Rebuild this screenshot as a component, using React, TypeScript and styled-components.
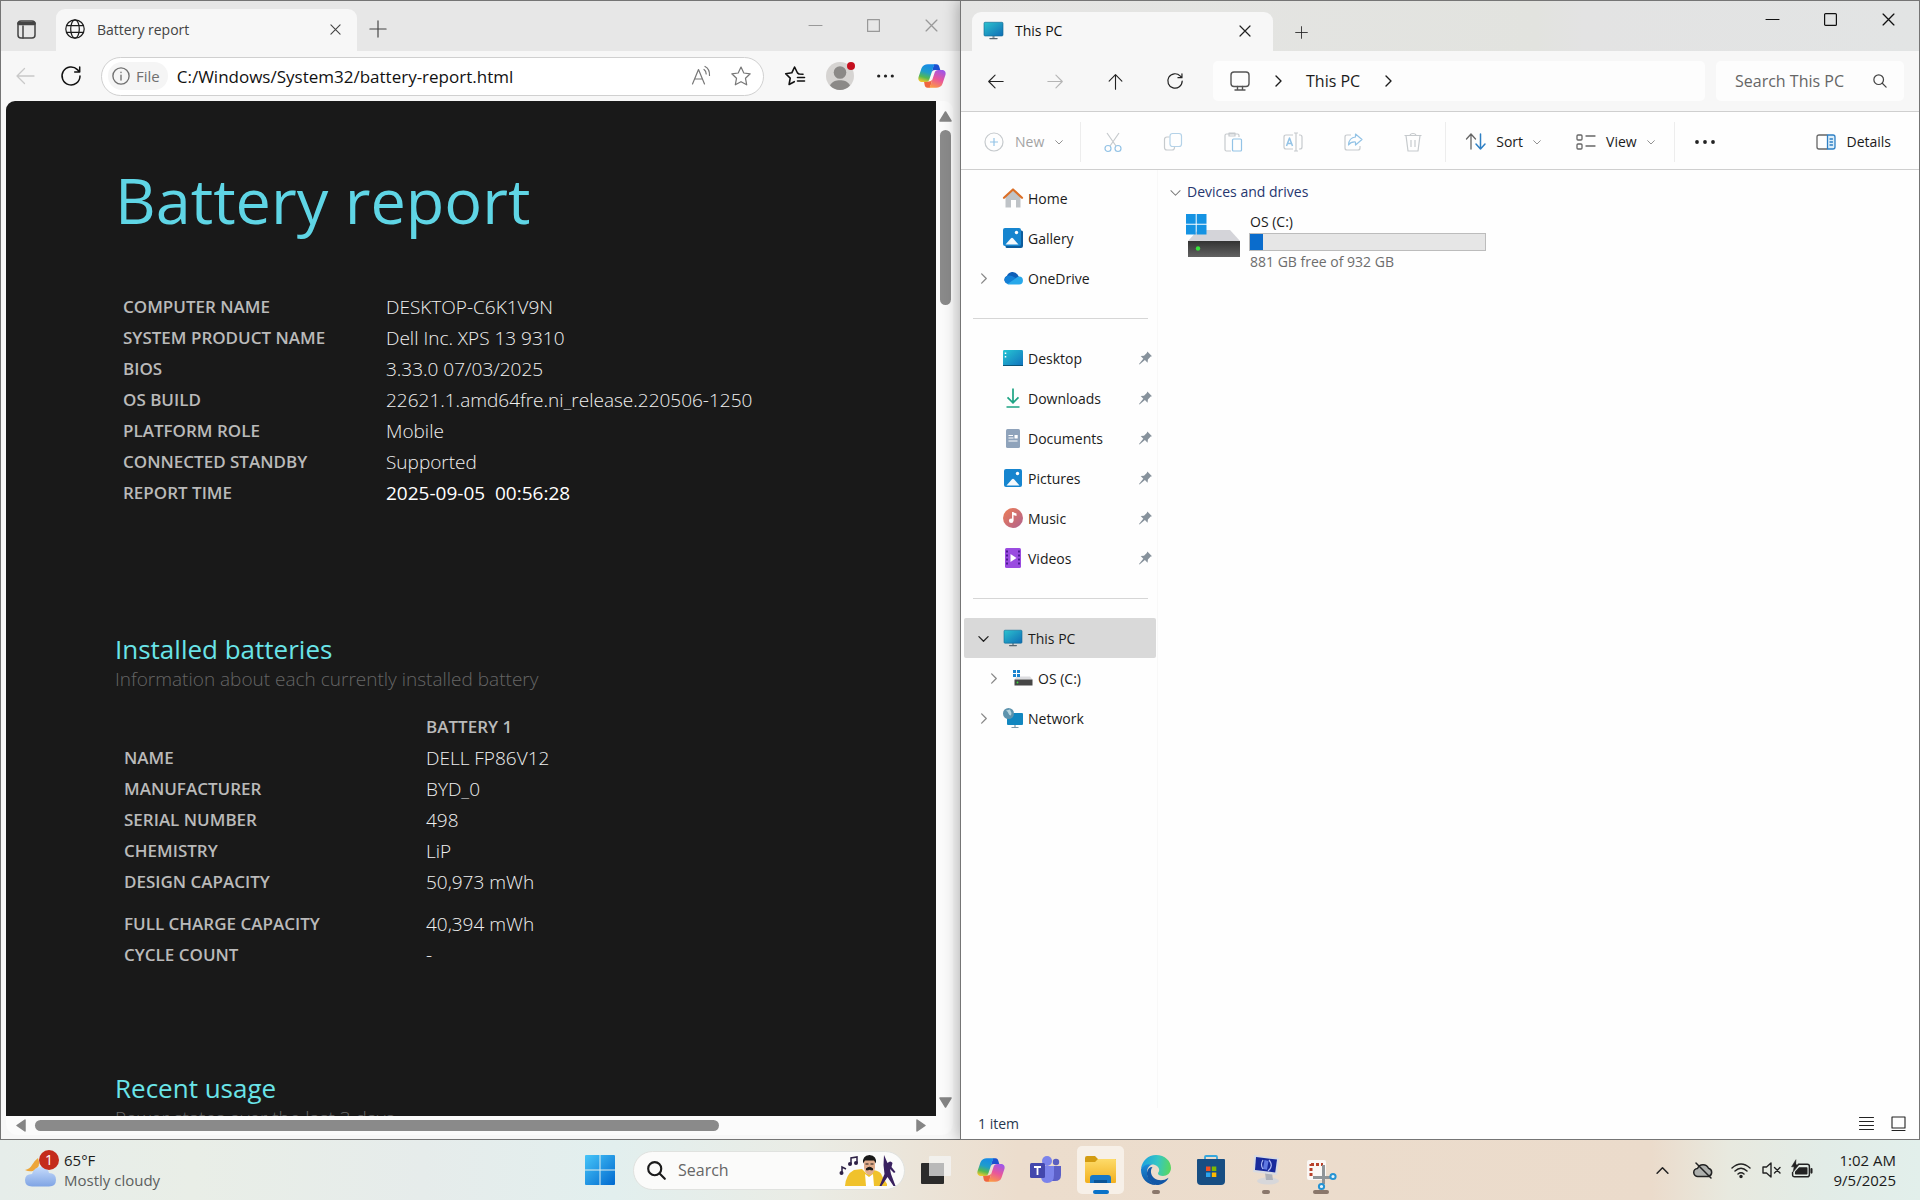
import React from "react";
import styled, { createGlobalStyle } from "styled-components";

const GlobalStyle = createGlobalStyle`
  *, *::before, *::after { box-sizing: border-box; }
  body { margin: 0; font-family: "Open Sans", "Noto Sans", sans-serif; font-size: 14px; color: #1b1b1b; }
  button, input { font: inherit; color: inherit; border: 0; background: none; padding: 0; margin: 0; }
  h1, h2, p, ul { margin: 0; padding: 0; font-weight: 400; }
  ul { list-style: none; }
  svg { display: block; flex: none; overflow: visible; }
`;

/* ---------- desktop ---------- */

const Desktop = styled.div`
  display: grid;
  grid-template-rows: minmax(0, 1fr) 60px;
  height: 100vh;
  overflow: hidden;
`;

const Windows = styled.main`
  display: grid;
  grid-template-columns: minmax(0, 1fr) minmax(0, 1fr);
  min-height: 0;
`;

const AppWindow = styled.section<{ $front?: boolean }>`
  display: flex;
  flex-direction: column;
  min-width: 0;
  min-height: 0;
  background: ${(p) => (p.$front ? "#fefefe" : "#f7f7f7")};
  border: 1px solid #757575;
  border-right-width: ${(p) => (p.$front ? "1px" : "0")};
  box-shadow: ${(p) => (p.$front ? "-2px 0 14px rgba(0, 0, 0, 0.28)" : "none")};
`;

const TitleBar = styled.header<{ $tone: string }>`
  display: flex;
  align-items: flex-end;
  height: 50px;
  flex: none;
  background: ${(p) => p.$tone};
`;

const Tab = styled.div<{ $height: number; $lead: number; $inset: number }>`
  display: flex;
  align-items: center;
  width: 301px;
  height: ${(p) => p.$height}px;
  margin-left: ${(p) => p.$lead}px;
  padding: 0 12px 2px ${(p) => p.$inset}px;
  gap: 12px;
  background: #f7f7f7;
  border-radius: 9px 9px 0 0;
`;

const TabTitle = styled.span<{ $active?: boolean }>`
  flex: 1;
  font-weight: ${(p) => (p.$active ? 500 : 400)};
  color: ${(p) => (p.$active ? "#111" : "#444")};
`;

const IconButton = styled.button<{ $w?: number; $h?: number; $color?: string }>`
  display: flex;
  align-items: center;
  justify-content: center;
  width: ${(p) => p.$w ?? 40}px;
  height: ${(p) => p.$h ?? 40}px;
  color: ${(p) => p.$color ?? "#222"};
  flex: none;
`;

const Controls = styled.div<{ $pad: number; $color: string }>`
  display: flex;
  align-self: flex-start;
  margin-left: auto;
  padding-right: ${(p) => p.$pad}px;
  color: ${(p) => p.$color};
`;

/* ---------- browser ---------- */

const BrowserBar = styled.div`
  display: flex;
  align-items: center;
  height: 50px;
  flex: none;
  padding: 0 4px 0 1px;
`;

const AddressBar = styled.label`
  display: flex;
  align-items: center;
  flex: 1;
  min-width: 0;
  height: 39px;
  margin: 0 8px 0 7px;
  padding: 0 2px 0 6px;
  background: #fff;
  border: 1px solid #d0d0d0;
  border-radius: 20px;
`;

const SchemeChip = styled.span`
  display: flex;
  align-items: center;
  gap: 6px;
  height: 28px;
  padding: 0 8px 0 4px;
  margin-right: 9px;
  border-radius: 14px;
  background: #f5f5f5;
  color: #707070;
  font-size: 15px;
`;

const AddressInput = styled.input`
  flex: 1;
  min-width: 0;
  font-size: 17px;
  color: #111;
  outline: none;
`;

const AvatarWrap = styled(IconButton)`
  position: relative;
  &::after {
    content: "";
    position: absolute;
    top: 6px;
    right: 7px;
    width: 8px;
    height: 8px;
    border-radius: 50%;
    background: #c50f1f;
  }
`;

const Viewport = styled.div`
  display: grid;
  grid-template-columns: minmax(0, 1fr) 17px;
  grid-template-rows: minmax(0, 1fr) 19px;
  flex: 1;
  min-height: 0;
  margin: 0 7px 4px 5px;
  background: #fbfbfb;
  border-radius: 9px 9px 12px 12px;
  overflow: hidden;
`;

const Report = styled.article`
  overflow: hidden;
  min-height: 0;
  padding: 59px 20px 0 109px;
  background: #191919;
  white-space: nowrap;
`;

const ReportTitle = styled.h1`
  font-size: 63px;
  line-height: 80px;
  color: #5fd5e5;
`;

const DataTable = styled.table<{ $labelWidth: number; $top: number; $inset: number }>`
  width: 100%;
  margin-top: ${(p) => p.$top}px;
  border-collapse: collapse;
  table-layout: fixed;
  line-height: 24px;
  text-align: left;

  tr { height: 31px; }
  th, td { padding: 0; vertical-align: middle; }
  tr > :first-child { width: ${(p) => p.$labelWidth}px; padding-left: ${(p) => p.$inset}px; }
  th { font-size: 17px; font-weight: 600; color: #bababa; text-transform: uppercase; }
  td { font-size: 19px; font-weight: 300; color: #f0f0f0; white-space: pre; }
`;

const StrongCell = styled.td`
  && { font-weight: 400; color: #fff; }
`;

const SpacedRow = styled.tr`
  && { height: 42px; }
  && > * { padding-top: 11px; }
`;

const SectionTitle = styled.h2<{ $top: number }>`
  margin-top: ${(p) => p.$top}px;
  font-size: 26px;
  line-height: 32px;
  font-weight: 500;
  color: #6ae4e8;
`;

const SectionNote = styled.p`
  font-size: 19px;
  line-height: 28px;
  font-weight: 300;
  color: #666;
`;

const Scroll = styled.div<{ $vertical?: boolean }>`
  display: flex;
  flex-direction: ${(p) => (p.$vertical ? "column" : "row")};
  align-items: center;
  padding: ${(p) => (p.$vertical ? "9px 0 7px 2px" : "0 9px")};
`;

const Thumb = styled.div<{ $vertical?: boolean }>`
  flex: none;
  background: #8a8a8a;
  border-radius: 6px;
  ${(p) => (p.$vertical ? "width: 11px; height: 17.5%; margin: 7px 0 auto;" : "height: 11px; width: 75%; margin: 0 auto 0 7px;")}
`;

/* ---------- explorer ---------- */

const ExplorerNav = styled.div`
  display: flex;
  align-items: center;
  height: 61px;
  flex: none;
  padding: 0 15px 0 4px;
  background: #f7f7f7;
  border-bottom: 1px solid #cfcfcf;
`;

const Breadcrumb = styled.div`
  display: flex;
  align-items: center;
  flex: 1;
  min-width: 0;
  height: 40px;
  margin-left: 8px;
  padding-left: 17px;
  gap: 22px;
  background: #fdfdfd;
  border-radius: 5px;
  font-size: 16px;
`;

const SearchField = styled.label`
  display: flex;
  align-items: center;
  width: 188px;
  height: 40px;
  margin-left: 11px;
  padding: 0 17px 0 19px;
  background: #fdfdfd;
  border-radius: 5px;
  color: #444;
  font-size: 16px;
`;

const BareInput = styled.input`
  flex: 1;
  width: 100%;
  min-width: 0;
  outline: none;
  &::placeholder { color: #666; opacity: 1; }
`;

const CommandBar = styled.div`
  display: flex;
  align-items: center;
  height: 58px;
  flex: none;
  padding: 2px 20px 0 23px;
  border-bottom: 1px solid #cfcfcf;
`;

const Command = styled.button<{ $dim?: boolean; $gap?: number; $right?: number }>`
  display: flex;
  align-items: center;
  gap: ${(p) => p.$gap ?? 10}px;
  margin-right: ${(p) => p.$right ?? 0}px;
  height: 40px;
  color: ${(p) => (p.$dim ? "#a3a3a3" : "#1b1b1b")};
  & > svg:last-child:not(:first-child) { color: #8a8a8a; }
`;

const Divider = styled.span<{ $before?: number; $after?: number }>`
  width: 1px;
  height: 40px;
  margin-left: ${(p) => p.$before ?? 0}px;
  margin-right: ${(p) => p.$after ?? 0}px;
  background: #ededed;
`;

const Push = styled.span`
  flex: 1;
`;

const ExplorerBody = styled.div`
  display: grid;
  grid-template-columns: 197px minmax(0, 1fr);
  flex: 1;
  min-height: 0;
`;

const SideNav = styled.nav`
  padding: 8px 1px 0 3px;
  border-right: 1px solid #f8f8f8;
`;

const NavItem = styled.button<{ $active?: boolean; $nested?: boolean }>`
  display: grid;
  grid-template-columns: 20px 20px 1fr 17px;
  column-gap: 5px;
  align-items: center;
  justify-items: start;
  width: 100%;
  height: 40px;
  padding-left: ${(p) => (p.$nested ? "24px" : "14px")};
  background: ${(p) => (p.$active ? "#d9d9d9" : "transparent")};
  border-radius: 2px;
  color: #1b1b1b;
  text-align: left;
  & > :nth-child(2) { justify-self: center; }
  & > :nth-child(1) { color: ${(p) => (p.$active ? "#222" : "#888")}; }
`;

const NavRule = styled.li`
  height: 40px;
  padding: 20px 8px 0 9px;
  &::before { content: ""; display: block; height: 1px; background: #d6d6d6; }
`;

const FilePane = styled.div`
  padding: 11px 12px;
`;

const GroupHeading = styled.h2`
  display: flex;
  align-items: center;
  gap: 6px;
  font-size: 14px;
  line-height: 22px;
  color: #26366f;
  & > svg { color: #777; }
`;

const Drive = styled.div`
  display: grid;
  grid-template-columns: 55px 237px;
  column-gap: 8px;
  margin: 9px 0 0 16px;
  & > svg { margin-top: 2px; }
`;

const DriveName = styled.p`
  padding-left: 1px;
  line-height: 20px;
`;

const Usage = styled.div`
  height: 18px;
  margin: 1px 0;
  background: #e6e6e6;
  border: 1px solid #bcbcbc;
`;

const UsageFill = styled.div`
  height: 100%;
  background: #0a6ccc;
`;

const DriveNote = styled(DriveName)`
  color: #6d6d6d;
`;

const StatusBar = styled.footer`
  display: flex;
  align-items: center;
  gap: 17px;
  height: 31px;
  flex: none;
  padding: 0 13px 0 17px;
  color: #26384f;
`;

/* ---------- taskbar ---------- */

const Taskbar = styled.footer`
  display: grid;
  grid-template-columns: minmax(0, 1fr) auto minmax(0, 1fr);
  align-items: center;
  background: linear-gradient(90deg, #e6edea 0%, #e9eee7 10%, #e6eceb 22%, #e2efee 32%, #eaece5 42%, #ecddcd 53%, #ebdbcb 86%, #e8e9df 90%, #e2ece7 95%, #e2efeb 100%);
`;

const Weather = styled.button`
  display: flex;
  align-items: center;
  gap: 7px;
  padding-left: 24px;
  text-align: left;
  font-size: 15px;
  line-height: 20px;
`;

const WeatherIcon = styled.span`
  position: relative;
  width: 33px;
  height: 38px;
`;

const CountBadge = styled.span`
  position: absolute;
  top: -1px;
  right: -2px;
  width: 20px;
  height: 20px;
  border-radius: 50%;
  background: #c42b1c;
  color: #fff;
  font-size: 14px;
  text-align: center;
`;

const Muted = styled.span`
  display: block;
  color: #5c5f5e;
`;

const Dock = styled.div`
  display: flex;
  align-items: center;
`;

const DockButton = styled.button<{ $state?: "active" | "open" | "wide" }>`
  position: relative;
  display: flex;
  align-items: center;
  justify-content: center;
  width: 55px;
  height: 60px;

  &::before {
    content: "";
    position: absolute;
    inset: 6px 4px 6px;
    border-radius: 5px;
    background: ${(p) => (p.$state === "active" ? "#f7f0e8" : "transparent")};
  }
  &::after {
    content: "";
    position: absolute;
    bottom: 6px;
    width: ${(p) => (p.$state === "open" ? "8px" : "16px")};
    height: 4px;
    border-radius: 2px;
    background: ${(p) => (p.$state === "active" ? "#0a72c8" : p.$state ? "#8a776b" : "transparent")};
  }
  & > svg { position: relative; z-index: 1; }
`;

const DockSearch = styled.label`
  display: flex;
  align-items: center;
  gap: 12px;
  width: 272px;
  height: 39px;
  margin: 0 3px 0 6px;
  padding: 0 7px 0 13px;
  background: #fbfbfa;
  border: 1px solid #e0e2df;
  border-radius: 20px;
  font-size: 16px;
`;

const Tray = styled.div`
  display: flex;
  align-items: center;
  justify-content: flex-end;
  padding-right: 24px;
`;

const Clock = styled.time`
  margin-left: 15px;
  font-size: 15px;
  line-height: 20px;
  text-align: right;
`;

/* ---------- icons ---------- */

type IconProps = { size?: number; sw?: number; children?: React.ReactNode; box?: number };
const Line = ({ size = 20, sw = 1.3, box = 20, children }: IconProps) => (
  <svg width={size} height={size} viewBox={`0 0 ${box} ${box}`} fill="none" stroke="currentColor" strokeWidth={sw} strokeLinecap="round" strokeLinejoin="round" aria-hidden="true">
    {children}
  </svg>
);
const Plus = ({ size = 18 }: IconProps) => <Line size={size}><path d="M10 1v18M1 10h18" /></Line>;
const Cross = ({ size = 12 }: IconProps) => <Line size={size} box={12} sw={1.2}><path d="M1 1l10 10M11 1L1 11" /></Line>;
const Chevron = ({ dir, size = 12, sw = 1.4 }: { dir: "right" | "down" | "up"; size?: number; sw?: number }) => (
  <Line size={size} box={12} sw={sw}>
    <path d={dir === "right" ? "M4 1l5 5-5 5" : dir === "down" ? "M1 4l5 5 5-5" : "M1 8.500l5-5 5 5"} />
  </Line>
);
const Arrow = ({ turn = 0, size = 18 }: { turn?: number; size?: number }) => (
  <Line size={size}><g transform={`rotate(${turn} 10 10)`}><path d="M19 10H2M9.500 2.500L2 10l7.500 7.500" /></g></Line>
);
const Refresh = ({ size = 20, sw = 1.5 }: IconProps) => (
  <Line size={size} sw={sw}><path d="M19 10a9 9 0 1 1-2.600-6.400L18.500 5.700M18.700 1v4.900h-5" /></Line>
);
const Dots = ({ size = 18 }: IconProps) => (
  <svg width={size} height="6" viewBox="0 0 20 6" fill="currentColor" aria-hidden="true">
    <circle cx="2" cy="3" r="1.900" /><circle cx="10" cy="3" r="1.900" /><circle cx="18" cy="3" r="1.900" />
  </svg>
);
const Magnifier = ({ size = 15, sw = 1.4 }: IconProps) => (
  <Line size={size} box={16} sw={sw}><circle cx="6.500" cy="6.500" r="5.500" /><path d="M10.600 10.600L15 15" /></Line>
);
const Minimize = () => <Line size={13} box={13} sw={1.1}><path d="M0 6.500h13" /></Line>;
const Maximize = ({ round = 0 }: { round?: number }) => <Line size={13} box={13} sw={1.2}><rect x=".6" y=".6" width="11.800" height="11.800" rx={round} /></Line>;

const TabActions = () => (
  <Line size={19} box={19} sw={1.5}>
    <rect x="1" y="1" width="17" height="17" rx="3" /><path d="M2 3.500h15" strokeWidth="3.600" /><path d="M6 6v12" />
  </Line>
);
const Globe = () => (
  <Line size={20} sw={1.2}><circle cx="10" cy="10" r="9.200" /><ellipse cx="10" cy="10" rx="4.300" ry="9.200" /><path d="M1.600 6.600h16.800M1.600 13.400h16.800" /></Line>
);
const Info = () => <Line size={18} sw={1.5}><circle cx="10" cy="10" r="9" /><path d="M10 9v5.500M10 5.800v.3" /></Line>;
const ReadAloud = () => <Line size={20} sw={1.2}><path d="M1.500 18L7.500 3.500 13.500 18M3.500 13h8M13 3.500c1.500 1 2.200 2.600 2.200 4.500M14 .5c3 1.500 4.700 4.500 4.500 9" /></Line>;
const Star = ({ list }: { list?: boolean }) => (
  <Line size={20} sw={list ? 1.6 : 1.2}>
    {list ? <path d="M12.500 7L9.600 1 6.800 6.800.7 7.700l4.500 4.400L4.100 18.500l5.200-2.800M14 8l4 .2M12.500 11.500h7M12.500 15h7M14 8l-1.500-1" />
      : <path d="M10 1l2.800 6 6.400.8-4.700 4.500 1.200 6.500L10 15.700 4.300 18.800l1.200-6.500L.8 7.800 7.200 7z" />}
  </Line>
);
const Avatar = () => (
  <svg width="28" height="28" viewBox="0 0 28 28" aria-hidden="true">
    <circle cx="14" cy="14" r="14" fill="#d6d4d2" /><circle cx="14" cy="10.500" r="6.300" fill="#8b8987" /><path d="M4 23.500C6 19.500 10 18.300 14 18.300s8 1.200 10 5.200A14 14 0 0 1 14 28 14 14 0 0 1 4 23.500z" fill="#8b8987" />
  </svg>
);
const Copilot = ({ id, size = 28 }: { id: string; size?: number }) => (
  <svg width={size} height={size} viewBox="0 0 28 28" aria-hidden="true">
    <defs>
      <linearGradient id={`${id}a`} x1=".6" y1="0" x2=".3" y2="1"><stop stopColor="#1689e8" /><stop offset=".45" stopColor="#1f9dcb" /><stop offset=".75" stopColor="#55b950" /><stop offset="1" stopColor="#f1c62d" /></linearGradient>
      <linearGradient id={`${id}b`} x1=".7" y1="0" x2=".3" y2="1"><stop stopColor="#a057e8" /><stop offset=".5" stopColor="#e9569a" /><stop offset="1" stopColor="#fb9a45" /></linearGradient>
    </defs>
    <path d="M16 2.200h2.500c1.700 0 2.400 1 2.800 2.500l1 3.300H17c-2 0-3 1-3.600 3z" fill="#1c4fd0" />
    <path d="M12 25.800H9.500c-1.700 0-2.400-1-2.800-2.500L6 19.500h5c2 0 3-1 3.600-3z" fill="#f0653f" />
    <path d="M9.800 2.200h8.400c-1.600 0-2.300 1.200-2.800 2.700l-4 12.300c-.6 1.800-1.700 2.800-3.600 2.800H4.300C1.500 20-.2 18 .5 15.200L3.600 6c.9-2.500 3.500-3.800 6.200-3.800z" fill={`url(#${id}a)`} />
    <path d="M18.200 25.800H9.800c1.600 0 2.300-1.200 2.800-2.700l4-12.300c.6-1.800 1.700-2.800 3.600-2.800h3.500c2.800 0 4.500 2 3.800 4.800L24.400 22c-.9 2.500-3.500 3.800-6.200 3.800z" fill={`url(#${id}b)`} />
  </svg>
);
const Triangle = ({ d }: { d: string }) => <svg width="13" height="13" viewBox="0 0 13 13" fill="#858585" stroke="#858585" strokeWidth="1.500" strokeLinejoin="round" aria-hidden="true"><path d={d} /></svg>;

const Monitor = ({ id, size = 18 }: { id: string; size?: number }) => (
  <svg width={size} height={size} viewBox="0 0 18 18" aria-hidden="true">
    <linearGradient id={id} x1="0" y1="0" x2="1" y2="1"><stop stopColor="#2cc3cf" /><stop offset="1" stopColor="#0f6cb5" /></linearGradient>
    <path d="M8 14h2v2.500H8z" fill="#8b98a0" /><rect x="5" y="16" width="8" height="1.200" rx=".6" fill="#56646e" />
    <rect y="1.200" width="18" height="13" rx="1" fill={`url(#${id})`} stroke="#116a93" strokeWidth=".6" />
  </svg>
);
const HomeIcon = () => (
  <svg width="20" height="20" viewBox="0 0 20 20" aria-hidden="true">
    <path d="M2.500 9L10 2.500 17.500 9v10.500H13V12H8v7.500H2.500z" fill="#bfc3c7" /><path d="M1 9.800L10 1.500l9 8.300" fill="none" stroke="#db6f27" strokeWidth="2.200" strokeLinecap="round" strokeLinejoin="round" />
  </svg>
);
const PictureIcon = ({ stack }: { stack?: boolean }) => (
  <svg width={stack ? 20 : 18} height={stack ? 20 : 18} viewBox={stack ? "0 0 20 20" : "0 0 18 18"} aria-hidden="true">
    {stack && <path d="M17 2.500h1.500q1.500 0 1.500 1.500v14q0 2-2 2H4q-1.500 0-1.500-1.500V17H17z" fill="#0d5c9c" />}
    <rect width="18" height="18" rx="2" fill="#1685cf" /><path d="M2.500 16.500L8 10.200q1-1 2 0l5.500 6.300z" fill="#f5fafd" /><circle cx="13.500" cy="4.500" r="1.700" fill="#fff" />
  </svg>
);
const CloudIcon = () => (
  <svg width="20" height="14" viewBox="0 0 20 14" aria-hidden="true">
    <path d="M4.500 12.500A4 4 0 0 1 4 4.800 6 6 0 0 1 14.500 3.500L16 6l-8 7z" fill="#0f5fb8" /><path d="M3.500 5.200A7 7 0 0 1 9 5l9 5-3 3H5A4.300 4.300 0 0 1 3.500 5.200z" fill="#1380d6" /><path d="M4.500 13l8-5.500A5 5 0 0 1 16 5.600 3.900 3.900 0 0 1 16 13.500H5z" fill="#28a8ea" />
  </svg>
);
const DesktopIcon = () => (
  <svg width="20" height="16" viewBox="0 0 20 16" aria-hidden="true">
    <linearGradient id="desk" x1="0" y1="0" x2="1" y2="1"><stop stopColor="#27c7d3" /><stop offset="1" stopColor="#1171bd" /></linearGradient>
    <rect width="20" height="16" rx="1.200" fill="url(#desk)" /><path d="M2.500 2.500v1.500M2.500 6v1.500" stroke="#fff" strokeWidth="1.500" /><path d="M0 15h20v1H0z" fill="#0b5478" />
  </svg>
);
const DownloadIcon = () => (
  <svg width="16" height="20" viewBox="0 0 16 20" fill="none" stroke="#1ea484" strokeWidth="1.700" aria-hidden="true"><path d="M8 .5v14M2.500 9.300L8 14.800l5.500-5.500M1.500 19h13" /></svg>
);
const DocumentIcon = () => (
  <svg width="14" height="19" viewBox="0 0 14 19" aria-hidden="true">
    <rect width="14" height="19" rx="1.500" fill="#8fa3bb" /><path d="M2.500 6.500H7M2.500 9h5M2.500 12h9" stroke="#fff" strokeWidth="1.200" /><rect x="8.500" y="6" width="3.200" height="3.500" fill="#fff" />
  </svg>
);
const MusicIcon = () => (
  <svg width="20" height="20" viewBox="0 0 20 20" aria-hidden="true">
    <linearGradient id="mus" x1="0" y1="0" x2="1" y2="1"><stop stopColor="#ee7d54" /><stop offset="1" stopColor="#b0628f" /></linearGradient>
    <circle cx="10" cy="10" r="10" fill="url(#mus)" /><path d="M9.800 4v8.500" stroke="#fff" strokeWidth="1.500" /><path d="M9.200 4l4.300 1.500v2.600L9.200 6.800z" fill="#fff" /><circle cx="8.200" cy="12.800" r="2.300" fill="#fff" />
  </svg>
);
const VideoIcon = () => (
  <svg width="16" height="20" viewBox="0 0 16 20" aria-hidden="true">
    <rect width="16" height="20" rx="1.500" fill="#9a4be0" /><path d="M2 2.500v16M14 2.500v16" stroke="#43148a" strokeWidth="1.800" strokeDasharray="2 2" /><path d="M5.500 6l6 4-6 4z" fill="#fff" />
  </svg>
);
const WinLogo = ({ size = 30 }: IconProps) => (
  <svg width={size} height={size} viewBox="0 0 30 30" aria-hidden="true">
    <linearGradient id={`win${size}`} x1="0" y1="0" x2="1" y2="1"><stop stopColor="#47c5f8" /><stop offset="1" stopColor="#0069cf" /></linearGradient>
    <path d="M1 0h13.500v14.500H0V1q0-1 1-1zM15.500 0H29q1 0 1 1v13.500H15.500zM0 15.500h14.500V30H1q-1 0-1-1zM15.500 15.500H30V29q0 1-1 1H15.500z" fill={`url(#win${size})`} />
  </svg>
);
const DriveIcon = ({ size = 55 }: IconProps) => (
  <svg width={size} height={size * 0.8} viewBox="0 0 55 44" aria-hidden="true">
    <linearGradient id={`drv${size}`} x1="0" y1="0" x2="0" y2="1"><stop stopColor="#333" /><stop offset="1" stopColor="#626262" /></linearGradient>
    <path d="M12 16h32l10 11H2z" fill="#d4d4d9" /><rect x="2" y="27" width="52" height="16" fill={`url(#drv${size})`} /><circle cx="12" cy="34.500" r="2.200" fill="#38e23c" />
    <path d="M0 0h9.700v9.700H0zM10.700 0h9.800v9.700h-9.800zM0 10.700h9.700v9.800H0zM10.700 10.700h9.800v9.800h-9.800z" fill="#1593e3" />
  </svg>
);
const SmallDriveIcon = () => (
  <svg width="20" height="16" viewBox="0 0 20 16" aria-hidden="true">
    <path d="M4 6.500h13l2.500 3H1.500z" fill="#dcdcdf" /><rect x="1.500" y="9.500" width="18" height="6" fill="#474747" /><circle cx="4.500" cy="12.500" r=".9" fill="#38e23c" />
    <path d="M0 0h3v3H0zM4 0h3v3H4zM0 4h3v3H0zM4 4h3v3H4z" fill="#1b83cf" />
  </svg>
);
const NetworkIcon = () => (
  <svg width="20" height="20" viewBox="0 0 20 20" aria-hidden="true">
    <rect x="4" y="5" width="16" height="12" rx="1" fill="#1287c0" /><path d="M12 17v2M8.500 19.500h7" stroke="#7c98a8" strokeWidth="1.200" /><circle cx="5.500" cy="5.500" r="5.500" fill="#5d93ad" /><path d="M3 2.500q2 1 2.500 3t2.500 2q1-3-1-6z" fill="#b6d4de" />
  </svg>
);
const Pin = () => (
  <svg width="13" height="14" viewBox="0 0 13 14" fill="#87929c" aria-hidden="true"><path d="M8.300.5L13 5.200l-1.300.4-2.800 2.800-.3 3.300-2.700-2.600L.5 13.500 0 13l4.300-5.300L1.700 5l3.300-.3L7.800 1.900z" /></svg>
);

const Two = ({ children }: { children: React.ReactNode }) => (
  <svg width="20" height="20" viewBox="0 0 20 20" fill="none" stroke="#c6cacd" strokeWidth="1.200" strokeLinejoin="round" aria-hidden="true">{children}</svg>
);
const NewIcon = () => <Two><circle cx="10" cy="10" r="9" /><path d="M10 6v8M6 10h8" stroke="#93c3e6" /></Two>;
const CutIcon = () => <Two><path d="M4 1l9 13M16 1L7 14" /><g stroke="#93c3e6"><circle cx="5" cy="16.500" r="3" /><circle cx="15" cy="16.500" r="3" /></g></Two>;
const CopyIcon = () => <Two><path d="M6.500 5H4Q1.500 5 1.500 7.500v8Q1.500 18 4 18h5q2.500 0 2.500-2.500V15" /><rect x="7" y="1.500" width="11.500" height="13" rx="2.500" stroke="#b4d2e8" /></Two>;
const PasteIcon = () => <Two><path d="M8 19H3.500Q2 19 2 17.500v-14Q2 2 3.500 2h11Q16 2 16 3.500V5M6 1h6v3H6z" /><rect x="9.500" y="7" width="9" height="12" rx="1" stroke="#93c3e6" /></Two>;
const RenameIcon = () => <Two><path d="M10 17H3q-2 0-2-2V5q0-2 2-2h7M16 3h1q2 0 2 2v10q0 2-2 2h-1M13 1.500v17M11 1h4M11 19h4" /><path d="M3.500 14L6.500 6l3 8M4.500 11.500h4" stroke="#93c3e6" strokeWidth="1.500" /></Two>;
const ShareIcon = () => <Two><path d="M8 3H4Q2 3 2 5v11q0 2 2 2h11q2 0 2-2v-2" /><path d="M12.500 2L19 7.500 12.500 13v-3Q8 9.500 5.500 13 6 5.500 12.500 5z" stroke="#93c3e6" /></Two>;
const TrashIcon = () => <Two><path d="M1.500 3.500h17M7 3.500q.3-2 3-2t3 2M3 3.500l2 15.500h10l2-15.500M8 8v7M12 8v7" /></Two>;
const SortIcon = () => <Line><path d="M5 17V2M.5 7L5 2l4.500 5" stroke="#666" /><path d="M14.500 2v15M10 12l4.500 5 4.500-5" stroke="#2d7fc4" strokeWidth="1.500" /></Line>;
const ViewIcon = () => <Line><g stroke="#666"><rect x="1" y="3" width="5" height="5" rx="1" /><rect x="1" y="12" width="5" height="5" rx="1" /><path d="M10 4h9M10 14h9" /></g></Line>;
const DetailsIcon = () => <Line><path d="M11 3H3Q1 3 1 5v10q0 2 2 2h8" stroke="#666" /><path d="M11.500 3H17q2 0 2 2v10q0 2-2 2h-5.500zM14 7h2.500M14 10h2.500M14 13h2.500" stroke="#2d7fc4" fill="#dceefa" /></Line>;
const AddressMonitor = () => <Line size={20} sw={1.4}><g stroke="#555"><rect x="1" y="1" width="18" height="14.500" rx="3" /><path d="M7.500 15.500v3M12.500 15.500v3M5 19h10" /></g></Line>;

const WeatherDrawing = () => (
  <svg width="33" height="38" viewBox="0 0 33 38" aria-hidden="true">
    <path d="M14 7q4 9-5 13-4 1-8-1 5-1 7-5 2-4 6-7z" fill="#eda63a" />
    <linearGradient id="wcl" x1="0" y1="0" x2="0" y2="1"><stop stopColor="#c5dbfb" /><stop offset="1" stopColor="#7fa4e4" /></linearGradient>
    <path d="M8 35.500q-7 0-7-6.500 0-6 7-6 2-7 9-7 7 0 8 6 7 0 7 7 0 6.500-7 6.500z" fill="url(#wcl)" />
  </svg>
);
const SearchArt = () => (
  <svg width="58" height="32" viewBox="0 0 58 32" aria-hidden="true">
    <path d="M6 32q1-12 9-16l8-1 5 5 6-4q8 1 9 6l5 8v2z" fill="#f0c22c" /><path d="M26 20l4 3 4-3 1 12h-8z" fill="#fff" />
    <path d="M25 6h11v8q-1.500 7-5.500 7T25 14z" fill="#e0ac8c" /><path d="M24 9.500q-1-8 6.500-8.500 7.500.5 6.500 8.500L35 6.500h-9z" fill="#191919" /><path d="M27.500 14.500q3-2.500 6 0v1.500q-3-1-6 0zM26.500 10h3M31.500 10h3" stroke="#191919" fill="#191919" />
    <path d="M45 1l3.500 8q3-3 5 0l-1 4 4 5-1.500 1-4-4 1 5 4.500 12h-2l-6-9-6 9h-2l5-12-1-9z" fill="#39215f" />
    <g fill="none" stroke="#2d2145" strokeWidth="1.500"><path d="M12 10V4l6-1v6M3 19v-6l4 2" /></g><g fill="#2d2145"><circle cx="11" cy="10" r="2" /><circle cx="17" cy="9" r="2" /><circle cx="2.500" cy="19" r="2" /></g>
  </svg>
);
const TaskView = () => (
  <svg width="30" height="30" viewBox="0 0 30 30" aria-hidden="true"><rect y="8" width="23" height="21" rx="1" fill="#2b2b2b" /><rect x="8" y="1" width="22" height="20" rx="1" fill="#f4f4f3" opacity=".8" /><path d="M8 8h15v13H8z" fill="#b9b9b9" /></svg>
);
const Teams = () => (
  <svg width="32" height="28" viewBox="0 0 32 28" aria-hidden="true">
    <circle cx="26" cy="6" r="3.200" fill="#5b5fc0" /><path d="M18 10h13v9q0 6-6 6h-5z" fill="#5b5fc7" /><circle cx="17" cy="5" r="5" fill="#7b83eb" /><path d="M11 10h13v9q0 8-7 8-6 0-6-7z" fill="#7b83eb" />
    <rect y="7" width="15" height="15" rx="1.500" fill="#4347ad" /><path d="M4 11h7M7.500 11v8" stroke="#fff" strokeWidth="1.800" />
  </svg>
);
const Folder = () => (
  <svg width="32" height="30" viewBox="0 0 32 30" aria-hidden="true">
    <linearGradient id="fld" x1="0" y1="0" x2="0" y2="1"><stop stopColor="#fddb6a" /><stop offset="1" stopColor="#f2b01e" /></linearGradient>
    <path d="M0 3q0-2 2-2h8l3 3h17q1 0 1 1v6H0z" fill="#d39c12" /><path d="M0 7h10l3-3h17q1 0 1 1v22q0 1-1 1H2q-2 0-2-2z" fill="url(#fld)" /><path d="M5 28v-5q0-3 3-3h15q3 0 3 3v5h-4v-3H9v3z" fill="#1777c6" /><path d="M9 25h13v3H9z" fill="#0c5597" />
  </svg>
);
const Edge = () => (
  <svg width="30" height="30" viewBox="0 0 30 30" aria-hidden="true">
    <defs>
      <linearGradient id="eg1" x1="0" y1=".3" x2="1" y2=".4"><stop stopColor="#1b9fe0" /><stop offset=".55" stopColor="#35c6c4" /><stop offset="1" stopColor="#58d760" /></linearGradient>
      <linearGradient id="eg2" x1="0" y1="0" x2="0" y2="1"><stop stopColor="#1b8ddb" /><stop offset="1" stopColor="#0f529f" /></linearGradient>
    </defs>
    <path d="M0 14C1 6 7 0 15 0c9 0 15 6 15 13 0 5-4 8-8 8-3 0-5-1-5-2.500 0-1 1.200-1.700 1.200-3.500 0-3-3-5.500-7-5.500C6 9.500 1 12 0 14z" fill="url(#eg1)" />
    <path d="M0 14.500C1 11 6 8.800 11 9.500c-4 1.500-5 5-5 8 0 6 4 10.500 9.500 12.400C7 30.500 0 24 0 15z" fill="url(#eg2)" />
    <path d="M11.500 12C9 15 9.500 20 13 23c4 3 10 3 14.500-.3C26 26.500 21 30 15.500 30 9 28.500 5.500 23 6 17.500 6.500 14 8.500 12 11.500 12z" fill="#1257a6" />
  </svg>
);
const Store = () => (
  <svg width="30" height="30" viewBox="0 0 30 30" aria-hidden="true">
    <path d="M9 5V2q0-1 1-1h10q1 0 1 1v3" fill="none" stroke="#36a7dd" strokeWidth="1.800" /><path d="M1 5q0-1 1-1h26q1 0 1 1v21q0 4-4 4H5q-4 0-4-4z" fill="#174e83" />
    <path d="M10 11.500h4.500V16H10z" fill="#f25022" /><path d="M15.800 11.500h4.500V16h-4.500z" fill="#7fba00" /><path d="M10 17.500h4.500V22H10z" fill="#2ba5ee" /><path d="M15.800 17.500h4.500V22h-4.500z" fill="#ffb900" />
  </svg>
);
const Remote = () => (
  <svg width="28" height="32" viewBox="0 0 28 32" aria-hidden="true">
    <ellipse cx="16" cy="27" rx="11" ry="3.500" fill="#d7d7da" /><path d="M13 19h7l1 7h-7z" fill="#aeb1b9" /><path d="M2 1l25 3-2 17L1 18z" fill="#d8dbe2" /><path d="M4 3l21 2.500-1.800 13L3 16z" fill="#182a9c" /><path d="M12.500 6l-1.500 9 4 .8L16.500 7z" fill="#5f78e2" /><path d="M17 6q5 6-1 11M11 6q-3 5 0 9" fill="none" stroke="#aebcf5" strokeWidth="1.200" />
  </svg>
);
const Snip = () => (
  <svg width="30" height="26" viewBox="0 0 30 26" aria-hidden="true">
    <rect x="1" y="3" width="19" height="20" rx="2" fill="#faf7f5" /><path d="M5 19V7M5 7.500h12" fill="none" stroke="#b8402a" strokeWidth="3" strokeDasharray="3 2" /><path d="M17.500 8v19M7 20.500h18" stroke="#8f9498" strokeWidth="3" /><g fill="#e8f4fb" stroke="#2593d3" strokeWidth="2"><circle cx="27" cy="19.500" r="2.600" /><circle cx="15.500" cy="29.500" r="2.600" /></g>
  </svg>
);
const TrayCloud = () => <Line size={20} sw={1.5}><path d="M5 16.500A4 4 0 0 1 4.500 8.500 6 6 0 0 1 15.500 8.200 4.300 4.300 0 0 1 15.500 16.500z" fill="#aeb0ad" /><path d="M3 3l15 15" /></Line>;
const Wifi = () => <Line size={20} sw={1.5}><path d="M1 8q9-8 18 0M4 11q6-5.500 12 0M7 14q3-2.500 6 0" /><circle cx="10" cy="16.500" r="1" fill="currentColor" /></Line>;
const Mute = () => <Line size={20} sw={1.4}><path d="M1 7h3.500L9 3v14l-4.500-4H1zM12.500 7.500l5.500 5.500M18 7.500L12.500 13" /></Line>;
const Battery = () => <Line size={21} sw={1.4}><path d="M7 4h8.500q2 0 2 2v8q0 2-2 2H3.500q-2 0-2-2v-2" /><path d="M19.500 8.500v3.500" strokeWidth="2" /><path d="M8 7.500h7v5.500H4.500v-1.500z" fill="currentColor" /><path d="M4.500 0L.5 6.500H3L2 11.500 7.500 4.500H4.800z" fill="currentColor" strokeWidth=".5" /></Line>;

/* ---------- content ---------- */

const system: [string, string][] = [
  ["Computer name", "DESKTOP-C6K1V9N"],
  ["System product name", "Dell Inc. XPS 13 9310"],
  ["BIOS", "3.33.0 07/03/2025"],
  ["OS build", "22621.1.amd64fre.ni_release.220506-1250"],
  ["Platform role", "Mobile"],
  ["Connected standby", "Supported"],
];

const battery: [string, string][] = [
  ["Name", "DELL FP86V12"],
  ["Manufacturer", "BYD_0"],
  ["Serial number", "498"],
  ["Chemistry", "LiP"],
  ["Design capacity", "50,973 mWh"],
];

const library: [string, React.ReactNode][] = [
  ["Desktop", <DesktopIcon />],
  ["Downloads", <DownloadIcon />],
  ["Documents", <DocumentIcon />],
  ["Pictures", <PictureIcon />],
  ["Music", <MusicIcon />],
  ["Videos", <VideoIcon />],
];

const tools: [string, React.ReactNode][] = [
  ["Cut", <CutIcon />],
  ["Copy", <CopyIcon />],
  ["Paste", <PasteIcon />],
  ["Rename", <RenameIcon />],
  ["Share", <ShareIcon />],
  ["Delete", <TrashIcon />],
];

const drive = { total: 932, free: 881 };

const WindowControls = ({ pad, height, color, round }: { pad: number; height: number; color: string; round?: number }) => (
  <Controls $pad={pad} $color={color}>
    <IconButton $w={58} $h={height} $color="inherit" aria-label="Minimize"><Minimize /></IconButton>
    <IconButton $w={58} $h={height} $color="inherit" aria-label="Maximize"><Maximize round={round} /></IconButton>
    <IconButton $w={58} $h={height} $color="inherit" aria-label="Close"><Cross size={13} /></IconButton>
  </Controls>
);

const NavRow = ({ label, icon, open, pinned, nested, active }: { label: string; icon: React.ReactNode; open?: "right" | "down"; pinned?: boolean; nested?: boolean; active?: boolean }) => (
  <li>
    <NavItem $nested={nested} $active={active}>
      <span>{open && <Chevron dir={open} size={11} />}</span>
      {icon}
      <span>{label}</span>
      {pinned && <Pin />}
    </NavItem>
  </li>
);

const Browser = () => (
  <AppWindow aria-label="Browser">
    <TitleBar $tone="#e7e7e7">
      <IconButton $w={50} $h={44} $color="#444" aria-label="Tab actions"><TabActions /></IconButton>
      <Tab $height={42} $lead={5} $inset={9}>
        <Globe />
        <TabTitle>Battery report</TabTitle>
        <IconButton $w={20} $h={20} $color="#444" aria-label="Close tab"><Cross size={11} /></IconButton>
      </Tab>
      <IconButton $w={42} $h={44} $color="#444" aria-label="New tab"><Plus size={18} /></IconButton>
      <WindowControls pad={0} height={48} color="#999" />
    </TitleBar>
    <BrowserBar>
      <IconButton $w={46} $color="#c9c9c9" aria-label="Back"><Arrow size={20} /></IconButton>
      <IconButton $w={46} $color="#111" aria-label="Refresh"><Refresh /></IconButton>
      <AddressBar>
        <SchemeChip><Info />File</SchemeChip>
        <AddressInput aria-label="Address" defaultValue="C:/Windows/System32/battery-report.html" />
        <IconButton $color="#777" aria-label="Read aloud"><ReadAloud /></IconButton>
        <IconButton $color="#777" aria-label="Add to favorites"><Star /></IconButton>
      </AddressBar>
      <IconButton $w={46} $color="#111" aria-label="Favorites"><Star list /></IconButton>
      <AvatarWrap $w={44} aria-label="Profile"><Avatar /></AvatarWrap>
      <IconButton $w={46} $color="#222" aria-label="Settings and more"><Dots size={17} /></IconButton>
      <IconButton $w={48} aria-label="Copilot"><Copilot id="cpb" /></IconButton>
    </BrowserBar>
    <Viewport>
      <Report>
        <ReportTitle>Battery report</ReportTitle>
        <DataTable $labelWidth={271} $top={51} $inset={8}>
          <tbody>
            {system.map(([k, v]) => (
              <tr key={k}><th scope="row">{k}</th><td>{v}</td></tr>
            ))}
            <tr><th scope="row">Report time</th><StrongCell>{"2025-09-05  00:56:28"}</StrongCell></tr>
          </tbody>
        </DataTable>
        <SectionTitle $top={125}>Installed batteries</SectionTitle>
        <SectionNote>Information about each currently installed battery</SectionNote>
        <DataTable $labelWidth={311} $top={18} $inset={9}>
          <thead><tr><td /><th scope="col">Battery 1</th></tr></thead>
          <tbody>
            {battery.map(([k, v]) => (
              <tr key={k}><th scope="row">{k}</th><td>{v}</td></tr>
            ))}
            <SpacedRow><th scope="row">Full charge capacity</th><td>40,394 mWh</td></SpacedRow>
            <tr><th scope="row">Cycle count</th><td>-</td></tr>
          </tbody>
        </DataTable>
        <SectionTitle $top={102}>Recent usage</SectionTitle>
        <SectionNote>Power states over the last 3 days</SectionNote>
      </Report>
      <Scroll $vertical>
        <Triangle d="M6.500 2L12 11H1z" />
        <Thumb $vertical />
        <Triangle d="M6.500 11L12 2H1z" />
      </Scroll>
      <Scroll>
        <Triangle d="M2 6.500L10 1v11z" />
        <Thumb />
        <Triangle d="M11 6.500L3 1v11z" />
      </Scroll>
    </Viewport>
  </AppWindow>
);

const Explorer = () => (
  <AppWindow $front aria-label="File Explorer">
    <TitleBar $tone="linear-gradient(90deg, #e5e5e4, #e2e3df 60%, #e3e3e3 65%, #e2e4e4)">
      <Tab $height={39} $lead={11} $inset={12}>
        <Monitor id="mon1" size={19} />
        <TabTitle $active>This PC</TabTitle>
        <IconButton $w={32} $h={32} aria-label="Close tab"><Cross size={12} /></IconButton>
      </Tab>
      <IconButton $w={56} $h={38} aria-label="New tab"><Plus size={13} /></IconButton>
      <WindowControls pad={2} height={36} color="#111" round={1} />
    </TitleBar>
    <ExplorerNav>
      <IconButton $w={60} aria-label="Back"><Arrow size={17} /></IconButton>
      <IconButton $w={60} $color="#b5b5b5" aria-label="Forward"><Arrow turn={180} size={17} /></IconButton>
      <IconButton $w={60} aria-label="Up"><Arrow turn={90} size={17} /></IconButton>
      <IconButton $w={60} aria-label="Refresh"><Refresh size={16} /></IconButton>
      <Breadcrumb>
        <AddressMonitor />
        <Chevron dir="right" />
        <button>This PC</button>
        <Chevron dir="right" />
      </Breadcrumb>
      <SearchField>
        <BareInput aria-label="Search This PC" placeholder="Search This PC" />
        <Magnifier size={14} />
      </SearchField>
    </ExplorerNav>
    <CommandBar>
      <Command $dim $gap={11} $right={17}><NewIcon />New<Chevron dir="down" size={8} /></Command>
      <Divider $after={2} />
      {tools.map(([name, icon]) => (
        <IconButton key={name} $w={60} aria-label={name}>{icon}</IconButton>
      ))}
      <Divider $before={2} $after={20} />
      <Command $right={35}><SortIcon />Sort<Chevron dir="down" size={8} /></Command>
      <Command $right={19}><ViewIcon />View<Chevron dir="down" size={8} /></Command>
      <Divider />
      <IconButton $w={61} aria-label="See more"><Dots size={20} /></IconButton>
      <Push />
      <Command $right={8}><DetailsIcon />Details</Command>
    </CommandBar>
    <ExplorerBody>
      <SideNav aria-label="Folders">
        <ul>
          <NavRow label="Home" icon={<HomeIcon />} />
          <NavRow label="Gallery" icon={<PictureIcon stack />} />
          <NavRow label="OneDrive" icon={<CloudIcon />} open="right" />
          <NavRule />
          {library.map(([label, icon]) => <NavRow key={label} label={label} icon={icon} pinned />)}
          <NavRule />
          <NavRow label="This PC" icon={<Monitor id="mon2" />} open="down" active />
          <NavRow label="OS (C:)" icon={<SmallDriveIcon />} open="right" nested />
          <NavRow label="Network" icon={<NetworkIcon />} open="right" />
        </ul>
      </SideNav>
      <FilePane>
        <GroupHeading><Chevron dir="down" size={11} sw={1.1} />Devices and drives</GroupHeading>
        <Drive>
          <DriveIcon />
          <div>
            <DriveName>OS (C:)</DriveName>
            <Usage><UsageFill style={{ width: `${((drive.total - drive.free) / drive.total) * 100}%` }} /></Usage>
            <DriveNote>{drive.free} GB free of {drive.total} GB</DriveNote>
          </div>
        </Drive>
      </FilePane>
    </ExplorerBody>
    <StatusBar>
      1 item
      <Push />
      <IconButton $w={15} $h={20} aria-label="Details view"><Line size={15} box={15} sw={1.1}><path d="M.5 1.500h14M.5 5.500h14M.5 9.500h14M.5 13.500h14" /></Line></IconButton>
      <IconButton $w={15} $h={20} aria-label="Large icons"><Line size={15} box={15} sw={1.1}><path d="M1 1h13v11H1zM1 14.500h13" /></Line></IconButton>
    </StatusBar>
  </AppWindow>
);

export default function App() {
  return (
    <>
      <GlobalStyle />
      <Desktop>
        <Windows>
          <Browser />
          <Explorer />
        </Windows>
        <Taskbar>
          <Weather>
            <WeatherIcon><WeatherDrawing /><CountBadge>1</CountBadge></WeatherIcon>
            <span>65°F<Muted>Mostly cloudy</Muted></span>
          </Weather>
          <Dock>
            <DockButton aria-label="Start"><WinLogo size={30} /></DockButton>
            <DockSearch>
              <Magnifier size={19} sw={1.8} />
              <BareInput aria-label="Search" placeholder="Search" />
              <SearchArt />
            </DockSearch>
            <DockButton aria-label="Task view"><TaskView /></DockButton>
            <DockButton aria-label="Copilot"><Copilot id="cpt" /></DockButton>
            <DockButton aria-label="Teams"><Teams /></DockButton>
            <DockButton $state="active" aria-label="File Explorer"><Folder /></DockButton>
            <DockButton $state="open" aria-label="Edge"><Edge /></DockButton>
            <DockButton aria-label="Store"><Store /></DockButton>
            <DockButton $state="open" aria-label="Remote Desktop"><Remote /></DockButton>
            <DockButton $state="wide" aria-label="Snipping Tool"><Snip /></DockButton>
          </Dock>
          <Tray>
            <IconButton $w={40} aria-label="Show hidden icons"><Chevron dir="up" size={13} /></IconButton>
            <IconButton $w={40} aria-label="OneDrive"><TrayCloud /></IconButton>
            <IconButton $w={36} aria-label="Wi-Fi"><Wifi /></IconButton>
            <IconButton $w={26} aria-label="Volume"><Mute /></IconButton>
            <IconButton $w={34} aria-label="Battery"><Battery /></IconButton>
            <Clock>1:02 AM<br />9/5/2025</Clock>
          </Tray>
        </Taskbar>
      </Desktop>
    </>
  );
}
